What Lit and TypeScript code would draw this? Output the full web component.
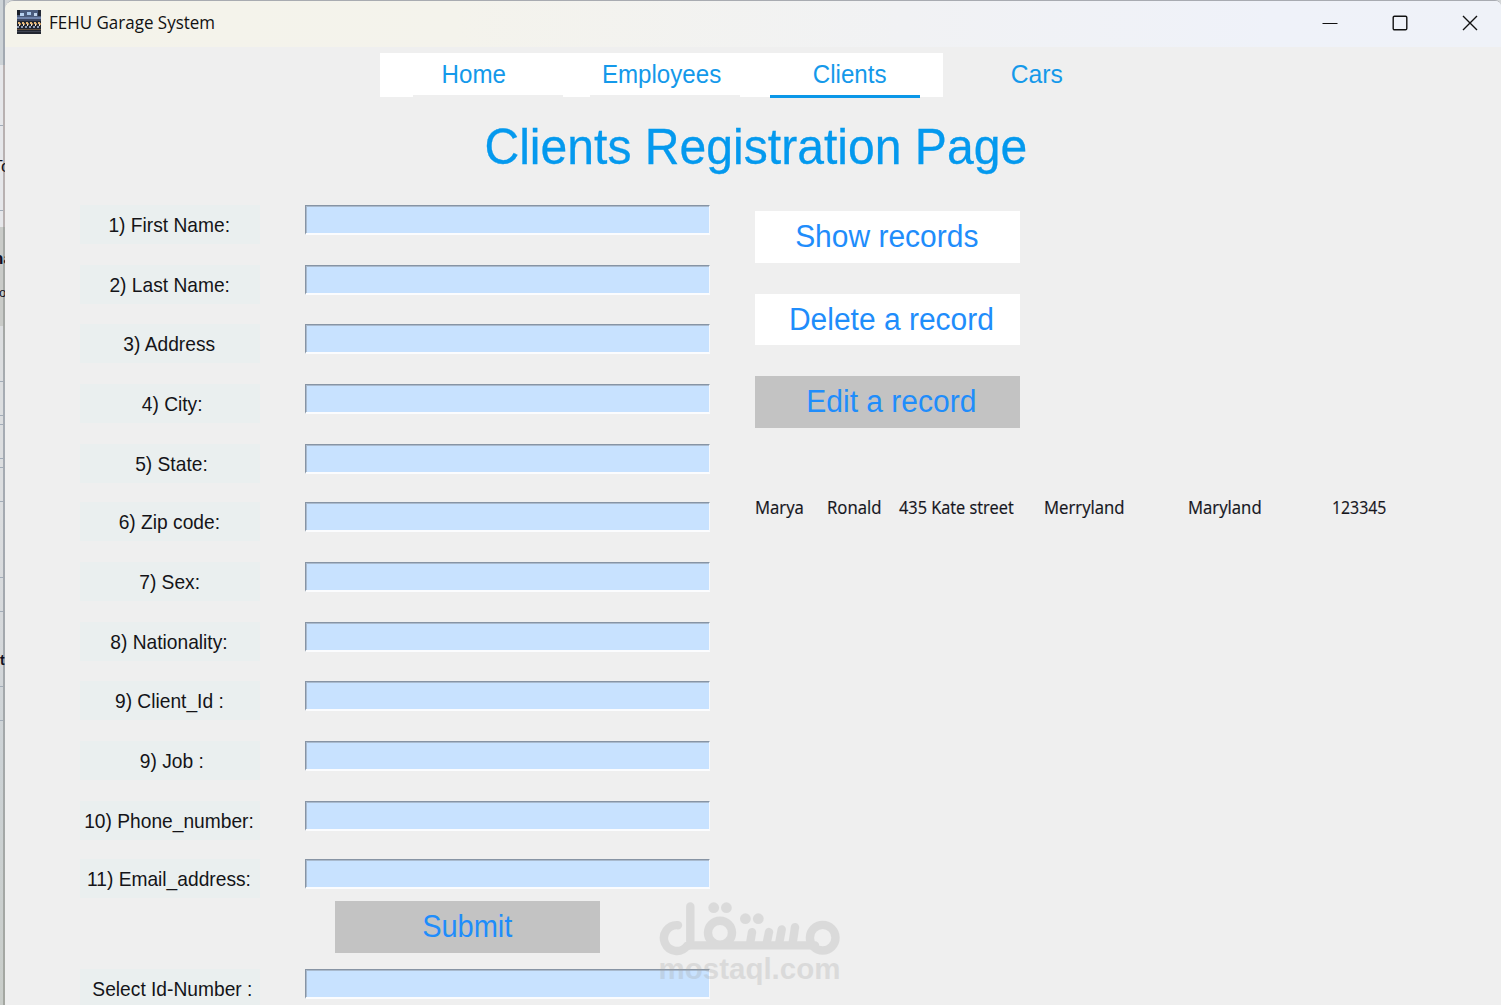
import { LitElement, html, css, svg } from "lit";
import { customElement } from "lit/decorators.js";

const FIELDS: string[] = [
  "1) First Name:",
  "2) Last Name:",
  "3) Address",
  " 4) City:",
  " 5) State:",
  "6) Zip code:",
  "7) Sex:",
  "8) Nationality:",
  "9) Client_Id :",
  " 9) Job :",
  "10) Phone_number:",
  "11) Email_address:",
];

const RECORD = ["Marya", "Ronald", "435 Kate street", "Merryland", "Maryland", "123345"];

@customElement("title-bar")
class TitleBar extends LitElement {
  static styles = css`
    :host {
      display: flex;
      align-items: center;
      height: 46px;
      padding: 0 23px 0 12px;
      background: linear-gradient(90deg, #f4f3ea 0%, #f4f3ec 30%, #f1f2f4 60%, #eff2f9 85%, #eff2f8 100%);
    }
    .icon { width: 24px; height: 24px; flex: none; margin-top: -4px; }
    .name {
      margin: -4px 0 0 8px;
      font: 18.5px/24px "Open Sans", "Noto Sans", sans-serif;
      color: #111;
      white-space: nowrap;
      transform: scaleX(0.918);
      transform-origin: 0 50%;
    }
    .controls { display: flex; align-items: center; gap: 54px; margin-left: auto; margin-top: -3px; }
    .controls svg { width: 16px; height: 16px; display: block; fill: none; stroke: #111; stroke-width: 1.4; }
  `;
  render() {
    return html`
      <svg class="icon" viewBox="0 0 24 24" shape-rendering="crispEdges">
        <rect width="24" height="24" fill="#222630"></rect>
        <rect width="24" height="7" fill="#4a5b7c"></rect>
        <rect x="0" y="0" width="3" height="5" fill="#1a1f2a"></rect>
        <rect x="3" y="3" width="4" height="3" fill="#b6d0ef"></rect>
        <rect x="10" y="2" width="4" height="3" fill="#a8c6ea"></rect>
        <rect x="17" y="3" width="3" height="3" fill="#c2d5ec"></rect>
        <rect x="21" y="0" width="3" height="6" fill="#242a38"></rect>
        <rect y="7" width="24" height="2" fill="#6f83aa"></rect>
        <rect y="9" width="24" height="2" fill="#3b4560"></rect>
        ${[1, 5, 9, 13, 17, 21].map(
          (x) => svg`<rect x=${x} y="12" width="2" height="2" fill="#e2b77c"></rect>
            <rect x=${x + 1} y="14" width="1" height="2" fill="#e8e4dc"></rect>
            <rect x=${x + 2} y="13" width="1" height="2" fill="#b9894f"></rect>
            <rect x=${x - 1} y="16" width="2" height="2" fill="#8f9bb5"></rect>`
        )}
        <rect y="19" width="24" height="1" fill="#66503c"></rect>
        <rect y="21" width="24" height="1" fill="#3f4452"></rect>
      </svg>
      <span class="name">FEHU Garage System</span>
      <div class="controls">
        <svg viewBox="0 0 16 16"><path d="M.5 8.5H15.5" stroke-width="1"></path></svg>
        <svg viewBox="0 0 16 16"><rect x="1.2" y="1.2" width="13.6" height="13.6" rx="1.3"></rect></svg>
        <svg viewBox="0 0 16 16"><path d="M1 1L15 15M15 1L1 15"></path></svg>
      </div>
    `;
  }
}

@customElement("brand-watermark")
class BrandWatermark extends LitElement {
  static styles = css`
    :host { display: block; width: 190px; height: 90px; opacity: 0.25; pointer-events: none; }
    svg { display: block; width: 190px; height: 90px; }
    .line { fill: none; stroke: #a0a0a0; stroke-width: 8.4; stroke-linecap: round; stroke-linejoin: round; }
    .dot { fill: #a0a0a0; }
    .site { fill: #a0a0a0; font: bold 29.5px "Liberation Sans", Arial, sans-serif; }
  `;
  render() {
    return html`
      <svg viewBox="655 900 190 90">
        <path class="line" d="M678 925.2A12.9 12.9 0 1 0 687 946L690.3 945.4H815M690.3 906.5V945"></path>
        <circle class="line" cx="720" cy="932.7" r="12"></circle>
        <circle class="line" cx="822.7" cy="937.7" r="12.8"></circle>
        <path class="line" d="M752 932.2L750 944M769 932L766.5 944M781.7 929.5L779 944M795 927.2L792.5 944"></path>
        <circle class="dot" cx="713.7" cy="907.7" r="5.4"></circle>
        <circle class="dot" cx="726.4" cy="907.7" r="5.4"></circle>
        <circle class="dot" cx="745.4" cy="918.7" r="5.4"></circle>
        <circle class="dot" cx="758.3" cy="918.7" r="5.4"></circle>
        <text class="site" x="658.5" y="978.5" textLength="182" lengthAdjust="spacingAndGlyphs">mostaql.com</text>
      </svg>
    `;
  }
}

@customElement("app-root")
class AppRoot extends LitElement {
  static styles = css`
    :host {
      display: block;
      position: relative;
      width: 1501px;
      height: 1005px;
      overflow: hidden;
      font-family: "Liberation Sans", Arial, sans-serif;
      background: #d3d6d8;
    }
    .shell { display: grid; grid-template-columns: 5px 1fr; height: 1005px; }
    .behind {
      position: relative;
      overflow: hidden;
      background: linear-gradient(#cdd3d7 0 65px, #e6e7ea 65px 227px, #c9cbc8 227px 326px, #dcdee0 326px 500px, #d5d8db 640px, #ccd2d5 760px, #c9cdc9 1005px);
    }
    .rule { position: absolute; left: 0; width: 5px; height: 1px; background: #a3adb9; }
    .edge { position: absolute; left: 3px; top: 0; width: 2px; height: 1005px; background: linear-gradient(#a2a9b1 0 65px, #b8b1b1 65px 227px, #a5a8a5 227px 326px, #a6acb4 400px, #a3a8ae 600px, #a4a7a1 1005px); }
    .scrap { position: absolute; left: 0; font-size: 17px; line-height: 20px; color: #101020; white-space: nowrap; }
    .scrap.to { top: 157px; left: -7.5px; }
    .scrap.na { top: 249px; left: -7px; }
    .scrap.o { top: 283px; left: -1px; font-size: 13px; }
    .scrap.t { top: 650px; font-size: 14px; }
    .window {
      box-sizing: border-box;
      height: 1005px;
      border-top: 1px solid #a8abb1;
      border-radius: 9px 6px 0 0;
      background: #efefef;
      overflow: hidden;
    }
    .fit { display: inline-block; white-space: pre; }
    .tabs { position: relative; display: flex; width: 751px; height: 43.5px; margin: 6px 0 0 375px; }
    .tab {
      flex: 0 0 187.7px;
      display: flex;
      justify-content: center;
      background: #fff;
      color: #1499ea;
      font-size: 25.3px;
      line-height: 43px;
    }
    .tab .fit { transform: scaleX(0.954); }
    .tab.plain { background: none; }
    .tab.plain .fit { transform: scaleX(0.975); }
    .bar { position: absolute; top: 42px; width: 150px; height: 3px; background: #efefef; }
    .bar.home { left: 33px; }
    .bar.employees { left: 210px; }
    .bar.clients { left: 390px; background: #0a97e8; }
    h1 {
      margin: 22.5px 0 0;
      padding-left: 6px;
      font-weight: 400;
      font-size: 49.6px;
      line-height: 56px;
      text-align: center;
      color: #0499ee;
      white-space: nowrap;
      -webkit-text-stroke: 0.3px #0499ee;
    }
    h1 .fit { transform: scaleX(0.97); }
    .body { display: grid; grid-template-columns: 630px 1fr; column-gap: 45px; padding-left: 75px; margin-top: 30px; }
    .fields { display: grid; grid-template-rows: 60px 59px 60px 60px 58px 60px 60px 59px 60px 60px 58px 42px; }
    .field { display: grid; grid-template-columns: 180px 405px; column-gap: 45px; align-items: start; }
    .label {
      display: flex;
      justify-content: center;
      height: 39px;
      background: #eaefef;
      font-size: 20.6px;
      line-height: 40px;
      color: #141418;
    }
    .label .fit { margin: 0 -10px 0 -11.5px; transform: scaleX(0.932); }
    .entry {
      box-sizing: border-box;
      height: 30px;
      background: #c8e2ff;
      border: solid;
      border-width: 1px 1px 2px 1px;
      border-color: #8794a4 #f6f9fd #fbfcfe #8794a4;
      box-shadow: inset 1px 1px 0 #a9bace;
    }
    .btn {
      display: block;
      width: 264.5px;
      height: 51.5px;
      padding: 0;
      border: 0;
      border-radius: 0;
      background: #fff;
      color: #1f8dfb;
      font: 31px/51px "Liberation Sans", Arial, sans-serif;
      text-align: center;
    }
    .btn .fit { transform: scaleX(0.967); }
    .btn.grey { background: #c3c3c3; }
    .submit { margin: 0 0 16px 255px; }
    .submit .fit { transform: scaleX(0.935); }
    .actions { display: flex; flex-direction: column; gap: 31px; padding-top: 6px; }
    .record {
      display: grid;
      grid-template-columns: 72px 72px 144.5px 144px 144px 100px;
      margin-top: 67px;
      font: 18px/24px "Open Sans", "Noto Sans", sans-serif;
      color: #15151c;
      white-space: nowrap;
      -webkit-text-stroke: 0.2px #15151c;
    }
    .record span { justify-self: start; transform: scaleX(0.93); transform-origin: 0 50%; }
    .record span:nth-child(3) { transform: scaleX(0.905); }
    .record span:nth-child(6) { transform: scaleX(0.88); }
    .mark { position: absolute; left: 655px; top: 900px; }
  `;

  private field(label: string) {
    return html`<div class="field"><div class="label"><span class="fit">${label}</span></div><div class="entry"></div></div>`;
  }

  render() {
    return html`
      <div class="shell">
        <div class="behind">
          ${[125, 210, 381, 415, 424, 458, 467, 501, 577, 611, 686, 720].map(
            (y) => html`<i class="rule" style="top:${y}px"></i>`
          )}
          <i class="edge"></i>
          <span class="scrap to">To</span>
          <b class="scrap na">na</b>
          <span class="scrap o">o</span>
          <b class="scrap t">t</b>
        </div>
        <div class="window">
          <title-bar></title-bar>
          <nav class="tabs">
            <span class="tab"><span class="fit">Home</span></span>
            <span class="tab"><span class="fit">Employees</span></span>
            <span class="tab"><span class="fit">Clients</span></span>
            <span class="tab plain"><span class="fit">Cars</span></span>
            <i class="bar home"></i><i class="bar employees"></i><i class="bar clients"></i>
          </nav>
          <h1><span class="fit">Clients Registration Page</span></h1>
          <div class="body">
            <div>
              <div class="fields">${FIELDS.map((f) => this.field(f))}</div>
              <button class="btn grey submit"><span class="fit">Submit</span></button>
              ${this.field(" Select Id-Number :")}
            </div>
            <div>
              <div class="actions">
                <button class="btn"><span class="fit">Show records</span></button>
                <button class="btn"><span class="fit"> Delete a record</span></button>
                <button class="btn grey"><span class="fit"> Edit a record</span></button>
              </div>
              <div class="record">${RECORD.map((v) => html`<span>${v}</span>`)}</div>
            </div>
          </div>
        </div>
      </div>
      <brand-watermark class="mark"></brand-watermark>
    `;
  }
}
